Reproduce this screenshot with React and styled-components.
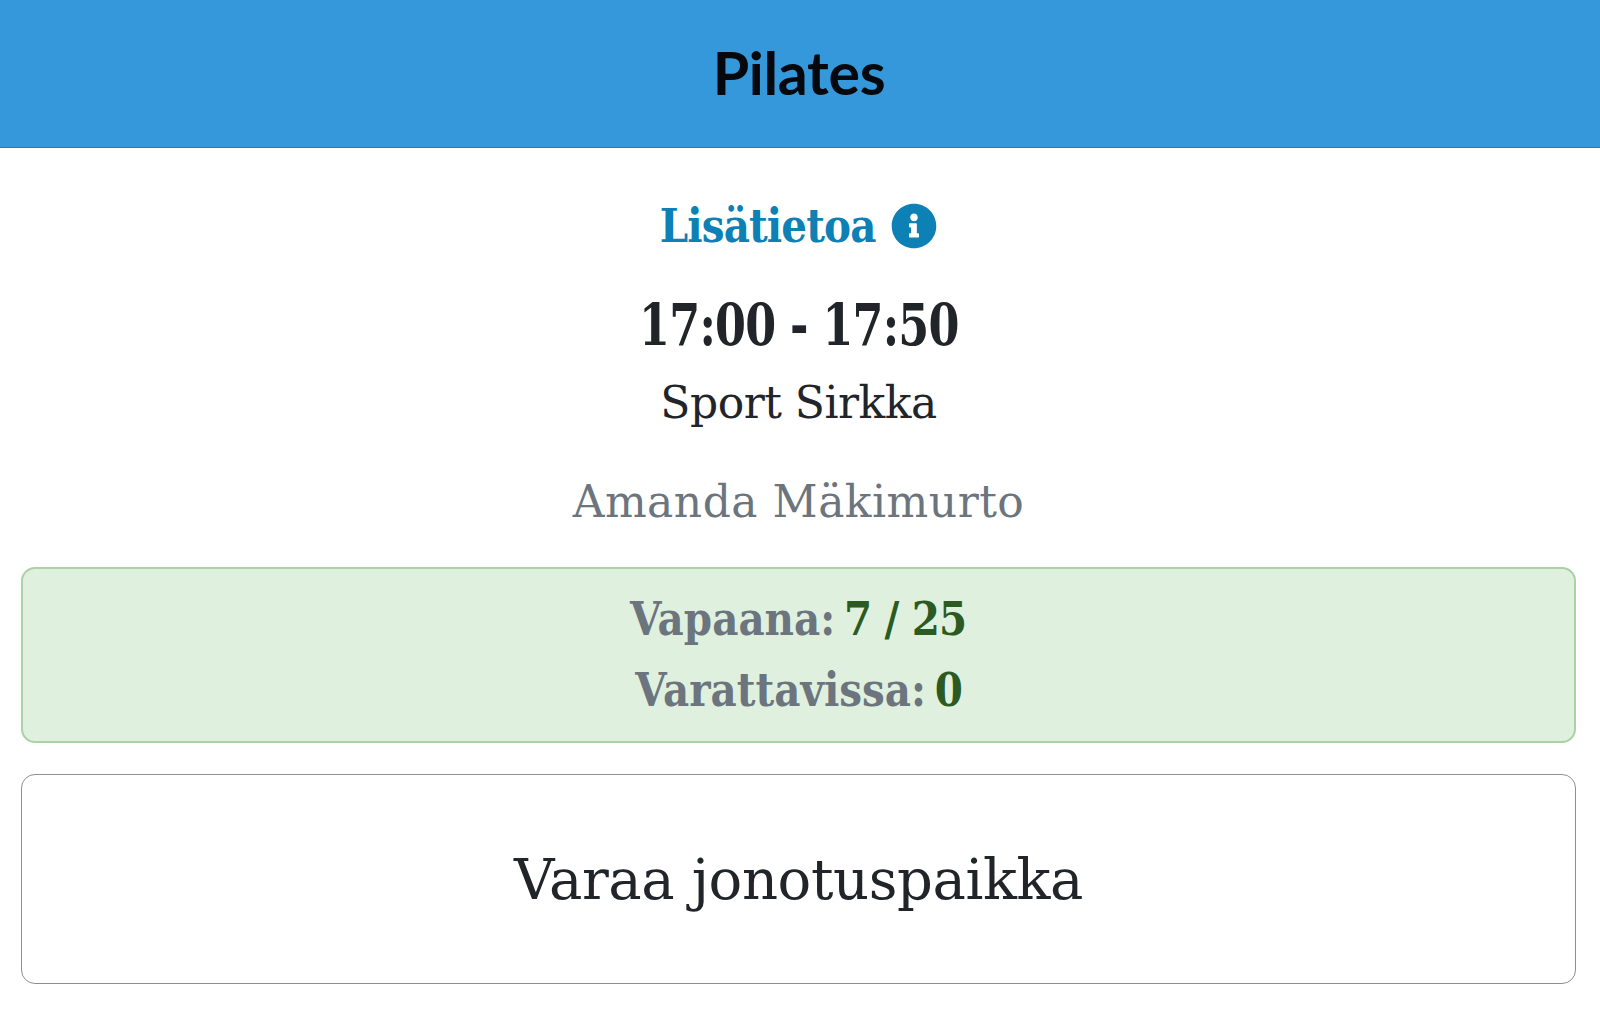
import React from "react";
import styled, { createGlobalStyle, css } from "styled-components";
import { FaInfoCircle } from "react-icons/fa";

const slab = `"DejaVu Serif", "Liberation Serif", serif`;

// the installed bold slab is much wider than the one in the design
const narrowBold = css`
  display: inline-block;
  font-weight: 700;
  transform: scaleX(${(props) => props.$scale || 0.88});
`;

const GlobalStyle = createGlobalStyle`
  html, body {
    margin: 0;
    padding: 0;
    background: #fff;
    color: #212529;
    font-family: ${slab};
  }
`;

const Page = styled.div`
  width: 1600px;
  height: 1011px;
  overflow: hidden;
  text-align: center;
`;

const Header = styled.header`
  height: 147px;
  background: #3498db;
  border-bottom: 1px solid #2a7ab0;
  display: flex;
  align-items: center;
  justify-content: center;
`;

const Title = styled.h1`
  margin: 0 2px 2px 0;
  font-family: "Lato", sans-serif;
  font-size: 59px;
  font-weight: 700;
  letter-spacing: -0.3px;
  color: #05080c;
`;

const Content = styled.main`
  padding: 50px 24px 0 21px;
`;

const InfoLink = styled.a`
  height: 56px;
  display: flex;
  align-items: center;
  justify-content: center;
  gap: 15px;
  color: #0d80b5;
`;

const InfoText = styled.span`
  ${narrowBold}
  margin: 0 -15px;
  font-size: 46px;
  letter-spacing: -1px;
`;

const InfoIcon = styled(FaInfoCircle)`
  width: 46px;
  height: 46px;
`;

const Time = styled.div`
  margin-top: 40px;
  height: 62px;
  white-space: nowrap;
`;

const TimeText = styled.span`
  ${narrowBold}
  font-size: 57px;
  line-height: 62px;
  letter-spacing: -1px;
`;

const Place = styled.div`
  margin-top: 19px;
  font-size: 44px;
  line-height: 56px;
  letter-spacing: -0.5px;
`;

const Teacher = styled.div`
  margin-top: 43px;
  font-size: 44px;
  line-height: 56px;
  color: #6c757d;
  letter-spacing: 0.5px;
`;

const Alert = styled.div`
  margin: 37px 0 0;
  height: 176px;
  box-sizing: border-box;
  border: 2px solid #a9d3a5;
  border-radius: 14px;
  background: #dff0df;
  display: flex;
  flex-direction: column;
  align-items: center;
  justify-content: center;
  gap: 14px;
`;

const AlertRow = styled.div`
  ${narrowBold}
  font-size: 46px;
  line-height: 57px;
  color: #6c757d;
  letter-spacing: 0;
  word-spacing: -6px;
`;

const Count = styled.span`
  color: #2b5a22;
  letter-spacing: -1px;
  word-spacing: normal;
`;

const BookButton = styled.button`
  display: block;
  width: 100%;
  height: 210px;
  margin-top: 31px;
  box-sizing: border-box;
  background: #fff;
  border: 1.5px solid #8f8f8f;
  border-radius: 14px;
  font-family: ${slab};
  font-size: 56px;
  color: #212529;
  letter-spacing: -0.4px;
`;

export default function App() {
  return (
    <Page>
      <GlobalStyle />
      <Header>
        <Title>Pilates</Title>
      </Header>
      <Content>
        <InfoLink>
          <InfoText>Lisätietoa</InfoText>
          <InfoIcon />
        </InfoLink>
        <Time>
          <TimeText $scale={0.78}>17:00 - 17:50</TimeText>
        </Time>
        <Place>Sport Sirkka</Place>
        <Teacher>Amanda Mäkimurto</Teacher>
        <Alert>
          <AlertRow>
            Vapaana: <Count>7 / 25</Count>
          </AlertRow>
          <AlertRow>
            Varattavissa: <Count>0</Count>
          </AlertRow>
        </Alert>
        <BookButton>Varaa jonotuspaikka</BookButton>
      </Content>
    </Page>
  );
}
